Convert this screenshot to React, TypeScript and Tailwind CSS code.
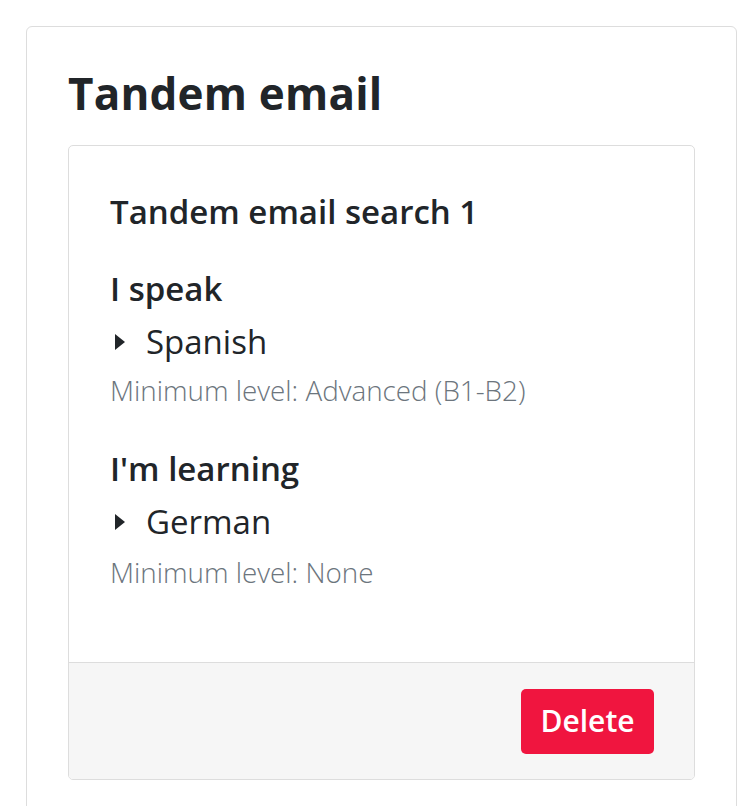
import React from "react";

const Caret = () => (
  <svg width="10" height="16" viewBox="0 0 10 16" className="shrink-0">
    <path d="M0 0 L10 8 L0 16 Z" fill="#212529" />
  </svg>
);

export default function App() {
  const sans = { fontFamily: '"Open Sans", "Noto Sans", sans-serif' };
  return (
    <div className="bg-white min-h-[806px] pt-[26px] pl-[26px]" style={sans}>
      <div className="w-[711px] min-h-[820px] border border-[#dddddd] rounded-[6px] px-[41px] pt-[38px]">
        <h1 className="text-[44px] leading-[56px] font-bold text-[#212529] tracking-[0.2px]">Tandem email</h1>
        <div className="mt-[24px] border border-[#dddddd] rounded-[5px] overflow-hidden">
          <div className="px-[41px] pt-[46px] h-[516px] text-[#212529]">
            <h2 className="text-[33px] leading-[40px] font-semibold">Tandem email search 1</h2>
            <h3 className="mt-[37px] text-[33px] leading-[40px] font-semibold">I speak</h3>
            <div className="mt-[13px] flex items-center gap-[21px] pl-[5px]">
              <Caret />
              <span className="text-[33px] leading-[40px]">Spanish</span>
            </div>
            <p className="mt-[12px] text-[27.8px] leading-[32px] font-light text-[#6c757d]">
              Minimum level: Advanced (B1-B2)
            </p>
            <h3 className="mt-[43px] text-[33px] leading-[40px] font-semibold">I'm learning</h3>
            <div className="mt-[13px] flex items-center gap-[21px] pl-[5px]">
              <Caret />
              <span className="text-[33px] leading-[40px]">German</span>
            </div>
            <p className="mt-[14px] text-[27.8px] leading-[32px] font-light text-[#6c757d]">
              Minimum level: None
            </p>
          </div>
          <div className="border-t border-[#dddddd] bg-[#f6f6f6] h-[117px] flex items-center justify-end pr-[40px]">
            <button className="bg-[#f0153f] text-white text-[30px] leading-[40px] font-semibold rounded-[5px] w-[133px] h-[65px]">
              Delete
            </button>
          </div>
        </div>
      </div>
    </div>
  );
}
